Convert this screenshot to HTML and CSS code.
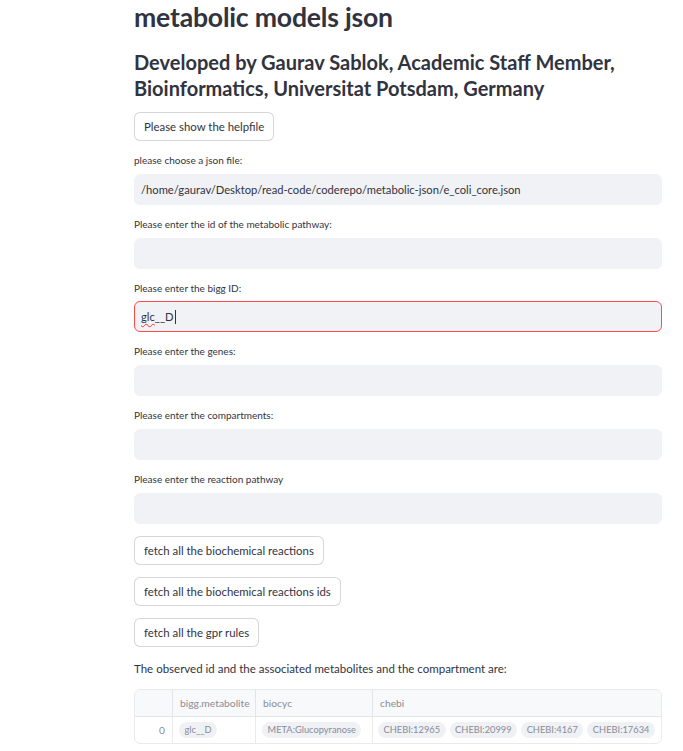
FILE: index.html
```html
<!DOCTYPE html>
<html>
<head>
<meta charset="utf-8">
<link rel="stylesheet" href="styles.css">
</head>
<body>
<main class="app">
  <h1 class="title">metabolic models json</h1>
  <h2 class="subtitle">Developed by Gaurav Sablok, Academic Staff Member, Bioinformatics, Universitat Potsdam, Germany</h2>
  <div class="stack">
    <div><button class="btn">Please show the helpfile</button></div>
    <div class="field">
      <label class="label">please choose a json file:</label>
      <div class="input">/home/gaurav/Desktop/read-code/coderepo/metabolic-json/e_coli_core.json</div>
    </div>
    <div class="field">
      <label class="label">Please enter the id of the metabolic pathway:</label>
      <div class="input"></div>
    </div>
    <div class="field">
      <label class="label">Please enter the bigg ID:</label>
      <div class="input focused"><span class="spell">glc</span>__D<span class="caret"></span></div>
    </div>
    <div class="field">
      <label class="label">Please enter the genes:</label>
      <div class="input"></div>
    </div>
    <div class="field">
      <label class="label">Please enter the compartments:</label>
      <div class="input"></div>
    </div>
    <div class="field">
      <label class="label">Please enter the reaction pathway</label>
      <div class="input"></div>
    </div>
    <div><button class="btn">fetch all the biochemical reactions</button></div>
    <div><button class="btn">fetch all the biochemical reactions ids</button></div>
    <div><button class="btn">fetch all the gpr rules</button></div>
    <p class="text">The observed id and the associated metabolites and the compartment are:</p>
    <div class="table">
      <div class="row head">
        <div class="cell c-idx"></div>
        <div class="cell c-bigg">bigg.metabolite</div>
        <div class="cell c-bio">biocyc</div>
        <div class="cell c-chebi">chebi</div>
      </div>
      <div class="row">
        <div class="cell c-idx num">0</div>
        <div class="cell c-bigg"><span class="pill">glc__D</span></div>
        <div class="cell c-bio"><span class="pill">META:Glucopyranose</span></div>
        <div class="cell c-chebi"><span class="pill">CHEBI:12965</span><span class="pill">CHEBI:20999</span><span class="pill">CHEBI:4167</span><span class="pill">CHEBI:17634</span></div>
      </div>
    </div>
  </div>
</main>
</body>
</html>
```
FILE: styles.css
```css
html, body {
  margin: 0;
  padding: 0;
  background: #ffffff;
}
body {
  font-family: "Lato", "Source Sans Pro", sans-serif;
  color: #31333f;
  width: 683px;
  height: 751px;
  overflow: hidden;
}
.app {
  margin-left: 134px;
  width: 528px;
}
.title {
  margin: 0;
  font-size: 26.6px;
  line-height: 34px;
  font-weight: 700;
  letter-spacing: -0.2px;
}
.subtitle {
  margin: 15px 0 0;
  font-size: 20px;
  line-height: 26px;
  font-weight: 700;
}
.stack {
  margin-top: 11px;
  display: flex;
  flex-direction: column;
  gap: 12px;
}
.btn {
  font-family: inherit;
  font-size: 11.4px;
  color: #31333f;
  background: #fff;
  border: 1px solid rgba(49, 51, 63, 0.2);
  border-radius: 6px;
  height: 29px;
  padding: 0 9px;
  line-height: 27px;
}
.field {
  display: flex;
  flex-direction: column;
}
.label {
  font-size: 10px;
  line-height: 14px;
  height: 20.75px;
}
.input {
  height: 31px;
  box-sizing: border-box;
  background: #f0f2f6;
  border: 1px solid #f0f2f6;
  border-radius: 6px;
  font-size: 11.2px;
  line-height: 29px;
  padding: 0 6px;
  white-space: nowrap;
  display: flex;
  align-items: center;
}
.input.focused {
  border-color: #ff4b4b;
}
.spell {
  text-decoration: underline wavy #ff3030;
  text-decoration-thickness: 1px;
  text-underline-offset: 2px;
}
.caret {
  display: inline-block;
  width: 1px;
  height: 14px;
  background: #31333f;
  margin-left: 1px;
}
.text {
  margin: 0;
  font-size: 11.5px;
  line-height: 19px;
}
.table {
  margin-top: -1px;
  border: 1px solid rgba(49, 51, 63, 0.1);
  border-radius: 6px;
  overflow: hidden;
  color: #6d6f78;
}
.row {
  display: flex;
  height: 26px;
}
.row.head {
  background: #f8f9fb;
  border-bottom: 1px solid rgba(49, 51, 63, 0.1);
  font-size: 10.3px;
}
.cell {
  display: flex;
  align-items: center;
  padding: 0 6px;
  box-sizing: border-box;
  border-right: 1px solid rgba(49, 51, 63, 0.1);
  white-space: nowrap;
  gap: 4px;
  flex-shrink: 0;
}
.cell:last-child { border-right: 0; }
.head .cell { color: #8a8c95; padding-left: 7px; }
.c-idx { width: 38px; }
.c-bigg { width: 83px; }
.c-bio { width: 117px; }
.c-chebi { flex: 1 1 auto; flex-shrink: 1; min-width: 0; padding-left: 5px; }
.num { justify-content: flex-end; color: #8a8c95; font-size: 10.3px; padding-right: 7px; }
.pill {
  background: #eff1f5;
  color: #8a8c95;
  border-radius: 8px;
  height: 16px;
  line-height: 16px;
  padding: 0 5.5px;
  font-size: 9.3px;
  flex-shrink: 0;
}
```
